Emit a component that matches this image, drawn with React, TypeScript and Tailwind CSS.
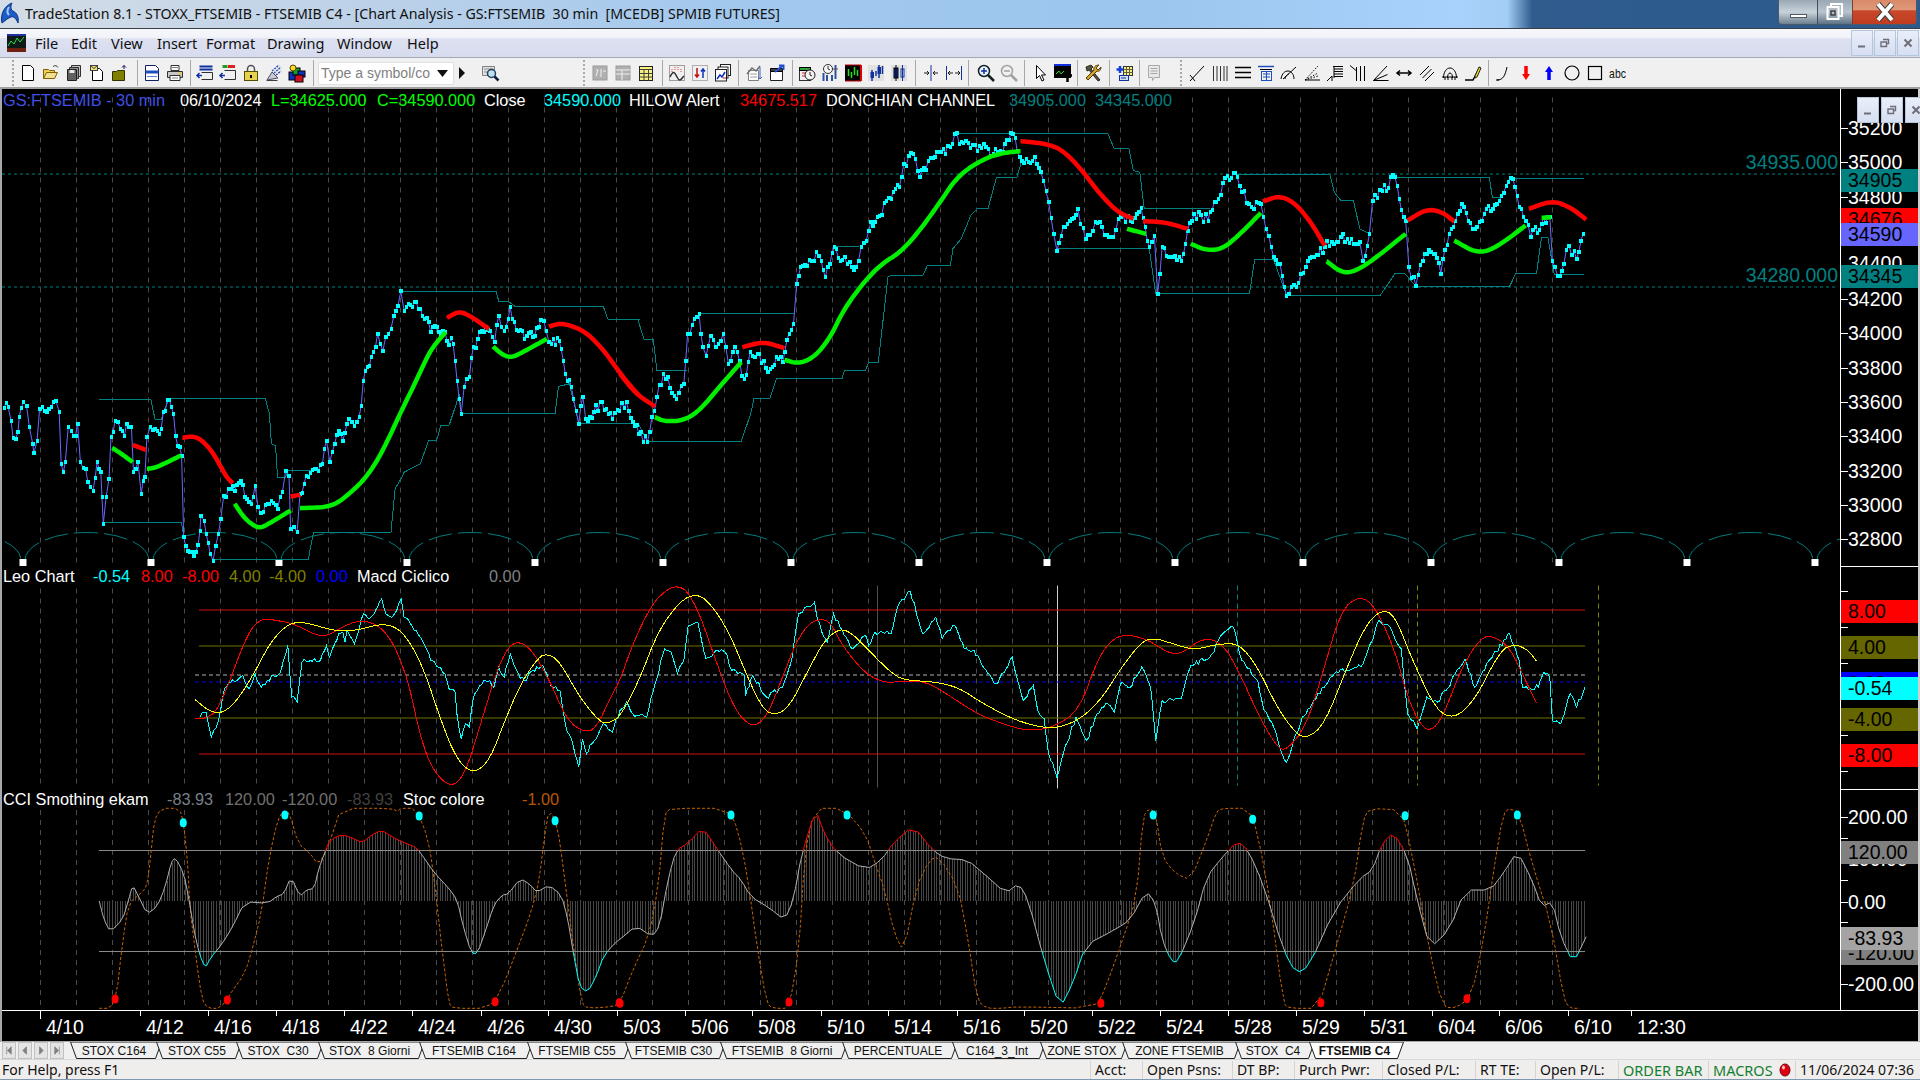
import React from 'react'

// ---- helpers: points are read off crops, z8/z11 etc turn them into screen pixels
type P = [number, number]
const parse = (s: string): P[] =>
  s.trim().split(/\s+/).map((p) => {
    const [a, b] = p.split(',')
    return [Number(a), Number(b)] as P
  })
const crop = (ox: number, oy: number, sx: number) => (s: string): P[] =>
  parse(s).map(([x, y]) => [ox + x / sx, oy + y / 3] as P)
const z8 = crop(0, 280, 2.45)
const z9 = crop(0, 560, 2.45)
const z10 = crop(0, 790, 2.45)
const z11 = crop(620, 120, 1.568)
const z12 = crop(620, 570, 1.568)
const join = (a: P[], b: P[]) => [...a.filter((p) => p[0] < b[0][0]), ...b]
const str = (pts: P[]) => pts.map(([x, y]) => `${x.toFixed(1)},${y.toFixed(1)}`).join(' ')

// corner cutting, keeps the two end points
const smooth = (pts: P[], rounds = 3): P[] => {
  let cur = pts
  for (let r = 0; r < rounds; r++) {
    const out: P[] = [cur[0]]
    for (let i = 0; i < cur.length - 1; i++) {
      const [x0, y0] = cur[i]
      const [x1, y1] = cur[i + 1]
      out.push([x0 + (x1 - x0) * 0.25, y0 + (y1 - y0) * 0.25], [x0 + (x1 - x0) * 0.75, y0 + (y1 - y0) * 0.75])
    }
    out.push(cur[cur.length - 1])
    cur = out
  }
  return cur
}

let seed = 7
const rnd = () => {
  seed = (seed * 16807) % 2147483647
  return seed / 2147483647 - 0.5
}
const rough = (pts: P[], step: number, amp: number) => {
  const out: P[] = []
  for (let i = 0; i < pts.length - 1; i++) {
    const [x0, y0] = pts[i]
    const [x1, y1] = pts[i + 1]
    const n = Math.max(1, Math.round((x1 - x0) / step))
    for (let k = 0; k < n; k++) {
      const t = k / n
      out.push([x0 + (x1 - x0) * t, y0 + (y1 - y0) * t + (k === 0 ? 0 : rnd() * amp)])
    }
  }
  out.push(pts[pts.length - 1])
  return out
}

// ---- price panel data
const price = rough(
  join(
    z8('10,382 20,380 27,420 32,472 44,455 47,410 57,365 65,375 72,440 80,490 83,518 91,480 97,385 110,390 125,380 137,360 145,395 150,550 155,575 160,545 167,440 175,450 185,465 190,430 197,545 210,565 215,605 228,630 238,545 247,575 250,650 253,730 260,650 267,595 272,470 282,420 295,445 305,465 310,430 322,438 327,575 338,545 346,640 355,590 360,470 368,440 385,450 395,445 400,395 415,358 425,400 430,465 440,500 445,525 450,770 460,810 480,815 490,750 492,705 500,720 505,760 515,820 522,840 535,760 541,715 548,645 565,625 575,630 590,600 605,655 615,670 625,615 632,680 645,695 665,660 680,685 692,635 700,570 708,585 712,745 720,740 728,755 735,640 745,610 755,590 770,565 790,550 800,480 808,545 820,490 830,450 840,480 855,415 868,435 880,408 885,375 890,300 900,260 915,215 925,160 938,210 945,170 958,145 965,105 975,75 982,32 990,90 1000,70 1020,65 1035,105 1050,125 1055,155 1060,140 1085,150 1095,180 1110,190 1120,300 1125,355 1130,400 1137,320 1150,290 1160,200 1170,175 1180,150 1200,150 1212,185 1222,105 1235,150 1250,80 1260,125 1285,175 1310,165 1325,118 1332,120 1345,185 1370,180 1380,240 1390,300 1400,320 1405,355 1418,430 1428,350 1435,415 1455,395 1475,365 1500,415 1535,365 1550,425 1565,460'),
    z11('43,965 50,890 58,830 68,760 75,770 88,835 100,790 106,640 124,580 130,680 135,705 142,645 150,680 162,640 170,730 180,680 195,775 204,695 215,700 232,755 245,710 255,725 265,640 272,610 277,490 283,440 300,420 312,405 322,470 336,380 345,420 360,425 370,440 378,380 390,330 403,290 425,235 438,200 445,130 460,100 470,170 483,120 497,95 510,100 525,40 535,65 560,90 570,70 585,100 600,95 616,40 630,120 650,110 660,155 672,245 680,340 685,390 695,320 718,265 730,355 745,305 770,350 785,290 800,300 817,262 830,380 838,345 843,520 850,380 860,410 880,420 890,330 900,280 922,300 935,245 952,165 968,170 975,215 990,260 1005,250 1017,345 1025,410 1035,430 1045,525 1060,500 1075,440 1085,410 1105,380 1130,350 1160,365 1165,420 1175,340 1180,240 1195,210 1215,170 1222,235 1232,300 1237,440 1248,495 1262,400 1278,400 1287,460 1300,340 1320,250 1340,325 1355,280 1375,250 1400,175 1410,260 1420,300 1428,350 1445,310 1458,290 1462,420 1470,465 1480,430 1488,375 1500,415 1510,340')
  ),
  2.2,
  10
)

const donchian = [
  z8('243,358 370,358 380,418 395,418 400,395 415,355 650,355 660,400 665,490 675,495 680,592 700,592 703,570 770,570'),
  z8('982,32 1215,32 1222,62 1245,62 1262,78 1478,78 1490,118 1568,118'),
  z11('0,598 28,598 38,658 52,658 58,750 105,750'),
  z11('124,580 272,580'),
  z11('337,378 375,378'),
  z11('525,40 765,40 775,85 798,85 805,150 815,155 822,265 925,265'),
  z11('960,162 1113,162 1120,215 1130,240 1150,240 1160,325 1175,340'),
  z11('1215,172 1363,172 1368,230 1385,230'),
  z11('1400,175 1512,175'),
  z8('253,727 445,727 450,770'),
  z8('525,838 755,838 768,755 958,755 968,625 985,590 990,575 1030,550 1050,480 1070,480 1080,435 1100,435 1118,370 1125,340 1130,398 1360,398 1368,318 1395,310 1418,428 1560,428'),
  z11('0,908 28,908 43,962 190,962 205,880 210,835 235,835 245,775 348,775 352,750 385,750 390,725 405,725 420,470 425,465 475,465 482,435 518,435 522,385 535,355 550,285 560,265 577,265 590,172 622,172 630,120'),
  z11('685,385 830,385 840,520 987,520 995,418 1025,418 1045,525 1192,525 1215,460 1230,458 1248,497 1395,497 1405,458 1437,458 1445,350 1455,350 1465,463 1512,463'),
]

const maGreen = [
  z8('275,502 300,522 325,545'),
  z8('360,565 380,562 410,545 443,525'),
  z8('575,670 600,715 625,738 640,742 665,725 712,690'),
  z8('735,683 800,680 830,665 860,635 890,600 920,550 950,480 980,400 1020,300 1050,220 1070,185 1092,155'),
  z8('1208,198 1230,222 1253,232 1285,212 1340,175'),
  z11('55,890 70,903 100,900 125,870 160,790 190,725'),
  z11('258,718 280,730 305,710 330,650 350,570 380,490 410,430 440,395 470,330 500,250 530,165 570,115 600,97 628,92'),
  z11('795,325 825,340'),
  z11('895,370 920,390 945,385 970,345 1005,277'),
  z11('1108,422 1130,455 1150,455 1180,420 1232,340'),
  z11('1308,360 1345,400 1375,380 1420,315'),
  z11('1445,292 1460,290'),
].map((p) => smooth(p))
const maRed = [
  z8('325,493 357,508'),
  z8('447,472 470,467 490,475 515,505 535,545 555,590 570,608'),
  z8('712,648 735,643'),
  z8('1095,112 1125,92 1150,105 1180,130 1198,145'),
  z8('1345,138 1375,128 1410,140 1440,160 1480,210 1520,280 1565,345'),
  z11('0,760 25,820 55,858'),
  z11('192,680 225,663 258,683'),
  z11('628,62 670,70 695,90 725,150 750,215 780,275 805,295'),
  z11('820,302 855,305 890,325'),
  z11('1008,243 1035,225 1060,250 1085,310 1105,375'),
  z11('1235,300 1265,265 1290,275 1308,303'),
  z11('1425,265 1462,240 1490,260 1515,297'),
].map((p) => smooth(p))

// ---- macd panel data
const macdCyan = rough(
  join(
    z9('490,470 505,455 518,530 535,480 550,385 565,365 595,345 610,385 625,340 640,380 670,345 685,340 705,255 715,410 728,425 740,305 770,295 785,300 800,255 807,290 830,220 840,215 845,245 850,210 868,250 890,160 905,175 920,150 935,115 945,160 960,170 972,150 983,115 990,170 1020,210 1045,265 1055,300 1090,340 1100,385 1115,395 1120,465 1130,535 1140,490 1150,500 1160,410 1185,360 1200,360 1210,380 1222,320 1235,350 1250,280 1270,340 1285,360 1315,320 1330,315 1350,375 1372,390 1385,490 1405,560 1418,618 1427,535 1437,580 1450,550 1478,490 1500,515'),
    z12('0,420 10,395 20,430 42,440 55,340 70,235 80,245 90,310 100,270 107,165 122,155 135,265 150,240 165,245 175,300 195,315 197,375 208,315 230,380 255,350 270,260 280,130 305,95 310,150 325,215 335,130 345,170 365,235 385,195 390,225 400,185 425,190 435,110 455,62 475,190 495,140 505,205 525,165 540,235 555,240 570,290 590,340 615,260 632,390 648,345 655,420 665,445 672,550 685,620 695,550 715,440 732,510 748,430 765,400 775,425 785,340 800,350 818,290 832,350 840,510 850,390 880,385 895,285 925,260 945,190 962,170 975,270 1000,330 1010,420 1025,470 1040,560 1045,575 1070,440 1085,400 1120,310 1165,280 1180,210 1190,150 1210,180 1225,235 1235,430 1250,475 1265,380 1282,395 1295,360 1325,265 1340,350 1365,265 1395,190 1410,270 1415,350 1440,350 1448,305 1458,320 1462,450 1475,460 1490,370 1500,410 1513,350')
  ),
  2,
  5
)
const macdRed = smooth(
  join(
    z9('478,475 500,475 530,455 560,370 595,255 620,195 645,175 670,178 720,190 770,222 800,228 840,198 885,178 930,195 965,250 1000,360 1030,530 1060,630 1105,683 1140,640 1180,480 1220,320 1250,250 1280,245 1310,280 1350,370 1390,480 1430,515 1460,505 1500,400'),
    z12('0,330 20,220 50,100 75,55 90,47 105,60 125,130 150,270 180,420 207,472 230,440 255,320 275,220 295,160 315,145 330,155 350,230 385,310 415,337 440,333 480,332 520,380 560,430 600,460 640,482 680,470 720,420 750,260 775,200 800,193 830,210 860,248 880,250 915,200 945,220 970,300 1000,430 1030,530 1045,540 1075,470 1100,320 1130,120 1160,75 1185,110 1215,240 1235,380 1255,465 1272,482 1290,440 1320,290 1350,200 1370,197 1395,230 1420,330 1437,398')
  ),
  2
)
const macdYellow = smooth(
  join(
    z9('478,417 510,450 540,460 575,430 620,345 660,250 700,195 735,183 780,197 830,213 880,208 925,192 965,195 1000,235 1040,330 1080,480 1120,600 1160,640 1200,600 1240,470 1280,360 1320,290 1340,280 1370,300 1420,410 1470,485 1490,488'),
    z12('0,440 30,330 60,180 95,90 120,70 140,95 170,180 200,320 225,420 245,433 265,410 295,300 320,210 345,173 365,190 395,250 430,315 450,330 490,333 530,350 570,400 620,450 670,475 710,460 750,400 790,280 820,210 840,203 870,222 900,238 935,222 970,217 1000,290 1030,410 1060,490 1078,503 1105,460 1140,290 1170,160 1195,117 1215,135 1245,280 1280,420 1308,445 1340,390 1380,240 1403,220 1425,240 1437,272')
  ),
  2
)

// ---- cci panel data
const cci = smooth(
  join(
    z10('243,333 255,390 270,425 300,390 315,330 325,285 340,320 360,372 385,350 405,290 420,215 430,203 450,250 462,320 475,420 488,490 503,535 515,505 545,460 570,410 600,335 655,340 680,318 695,312 713,260 735,320 750,300 770,295 780,240 795,190 808,150 838,133 865,145 888,158 910,135 935,120 960,140 990,158 1020,172 1040,205 1065,250 1100,295 1120,330 1135,410 1155,490 1170,490 1190,420 1210,345 1230,315 1245,312 1275,265 1300,285 1315,307 1345,285 1375,315 1390,380 1405,490 1420,590 1440,607 1460,560 1480,495 1510,455'),
    z12('0,1108 25,1067 50,1100 62,1070 75,930 88,840 105,822 130,772 150,830 175,900 190,930 205,980 235,1015 258,1050 272,990 285,850 307,718 320,790 340,850 385,900 410,870 430,815 460,768 490,840 510,865 545,870 570,910 605,970 625,940 640,990 665,1170 690,1315 710,1240 730,1125 775,1080 800,1050 825,962 840,1000 850,1110 865,1175 875,1175 900,1060 920,920 945,860 968,813 985,840 1010,950 1040,1140 1060,1210 1080,1190 1120,1020 1160,925 1180,900 1195,820 1213,787 1235,860 1250,990 1270,1135 1300,1080 1325,960 1365,960 1385,910 1407,843 1430,930 1445,1010 1462,995 1475,1100 1495,1180 1515,1100')
  ),
  1
)
const stoch = smooth(
  join(
    z10('243,655 270,655 285,620 300,460 315,340 345,310 360,290 370,190 378,90 395,55 440,55 450,100 460,220 465,350 480,500 495,630 510,655 540,655 565,610 600,550 620,470 640,370 660,200 680,90 695,62 710,70 730,160 760,190 780,225 800,180 815,130 835,55 960,55 975,65 980,55 1020,55 1050,150 1065,280 1085,500 1100,640 1110,655 1195,655 1225,610 1270,470 1300,370 1320,280 1335,130 1345,60 1365,100 1385,280 1405,470 1425,640 1440,655 1500,650'),
    z12('0,1300 20,1200 45,1100 60,950 70,730 80,715 170,715 185,780 200,920 215,1130 230,1300 240,1315 265,1315 280,1150 290,850 305,715 350,715 385,790 400,880 415,960 430,1090 445,1145 465,950 485,870 500,860 530,950 545,1100 560,1290 575,1315 600,1315 620,1310 745,1315 760,1260 790,1100 810,980 820,740 830,715 840,730 850,860 870,910 895,930 920,810 935,725 945,715 985,715 1000,790 1020,1000 1040,1300 1050,1315 1095,1315 1120,1150 1150,950 1165,750 1175,715 1225,720 1240,830 1270,1150 1290,1310 1310,1315 1335,1280 1355,1100 1370,900 1385,730 1395,715 1410,730 1430,880 1460,1060 1480,1290 1490,1315 1505,1315')
  ),
  1
)
const dotsCyan = [...z10('449,98 698,75 1027,78 1360,92'), ...z12('174,735 356,735 836,735 992,748 1231,737 1407,735')]
const dotsRed = [...z10('282,627 557,630 1213,635 1517,638'), ...z12('0,1300 265,1296 754,1300 1099,1298 1328,1286')]

const yAt = (pts: P[], x: number) => {
  for (let i = 0; i < pts.length - 1; i++) {
    if (x >= pts[i][0] && x <= pts[i + 1][0]) {
      const t = (x - pts[i][0]) / (pts[i + 1][0] - pts[i][0] || 1)
      return pts[i][1] + (pts[i + 1][1] - pts[i][1]) * t
    }
  }
  return 901
}
const histo: string[] = []
for (let x = 99; x < 1586; x += 2.6) histo.push(`M${Math.round(x) + 0.5} 901V${yAt(cci, x).toFixed(1)}`)

const gridX = Array.from({ length: 43 }, (_, k) => Math.round(39.6 + 36 * k) + 0.5)
const Grid = ({ y1, y2 }: { y1: number; y2: number }) => (
  <g stroke="#4a4a4a" strokeDasharray="5 5">
    {gridX.map((x) => (
      <line key={x} x1={x} x2={x} y1={y1} y2={y2} />
    ))}
  </g>
)

const archX = Array.from({ length: 16 }, (_, k) => 23 + 128 * (k - 1))

function PricePlot() {
  return (
    <svg viewBox="2 89 1838 477" className="absolute inset-0 w-full h-full">
      <Grid y1={97} y2={566} />
      <g stroke="#008080" strokeDasharray="3 3">
        <line x1="2" x2="1836" y1="173.5" y2="173.5" />
        <line x1="2" x2="1836" y1="286.5" y2="286.5" />
      </g>
      <g fill="none" stroke="#007c7c" strokeDasharray="24 6">
        {archX.map((x) => (
          <path key={x} d={`M${x + 2} 560A62 28 0 0 1 ${x + 126} 560`} />
        ))}
      </g>
      {archX.slice(1, 16).map((x) => (
        <rect key={x} x={x - 3.5} y="558.5" width="7" height="7" fill="#fff" />
      ))}
      <g fill="none" stroke="#008080" shapeRendering="crispEdges">
        {donchian.map((p, i) => (
          <polyline key={i} points={str(p)} />
        ))}
      </g>
      <polyline points={str(price)} fill="none" stroke="#6a6aff" />
      <g fill="#00ffff" shapeRendering="crispEdges">
        {price.map(([x, y], i) => (
          <rect key={i} x={x - 1.5} y={y - 2} width="3.5" height="4" />
        ))}
      </g>
      <g fill="none" strokeWidth="4.5" strokeLinejoin="round">
        {maGreen.map((p, i) => (
          <polyline key={i} points={str(p)} stroke="#00f000" />
        ))}
        {maRed.map((p, i) => (
          <polyline key={i} points={str(p)} stroke="#ff0000" />
        ))}
      </g>
    </svg>
  )
}

function MacdPlot() {
  return (
    <svg viewBox="2 567 1838 222" className="absolute inset-0 w-full h-full">
      <Grid y1={588} y2={785} />
      <line x1="877.5" x2="877.5" y1="585" y2="787" stroke="#505050" />
      <line x1="1057.5" x2="1057.5" y1="585" y2="788" stroke="#d0d0d0" />
      <line x1="1237.5" x2="1237.5" y1="585" y2="785" stroke="#008080" strokeDasharray="5 4" />
      <line x1="1417.5" x2="1417.5" y1="585" y2="785" stroke="#808000" strokeDasharray="5 4" />
      <line x1="1598.5" x2="1598.5" y1="585" y2="785" stroke="#808000" strokeDasharray="5 4" />
      <g strokeWidth="1">
        <line x1="199" x2="1585" y1="609.5" y2="609.5" stroke="#d01010" />
        <line x1="199" x2="1585" y1="753.5" y2="753.5" stroke="#d01010" />
        <line x1="199" x2="1585" y1="645.5" y2="645.5" stroke="#6f6f00" />
        <line x1="199" x2="1585" y1="717.5" y2="717.5" stroke="#6f6f00" />
        <line x1="195" x2="1585" y1="674.5" y2="674.5" stroke="#b0b0b0" strokeDasharray="4 3" />
        <line x1="195" x2="1585" y1="681.5" y2="681.5" stroke="#0000e0" strokeDasharray="4 3" />
      </g>
      <g fill="none" shapeRendering="crispEdges">
        <polyline points={str(macdCyan)} stroke="#00ffff" />
        <polyline points={str(macdRed)} stroke="#ff0000" />
        <polyline points={str(macdYellow)} stroke="#ffff00" />
      </g>
    </svg>
  )
}

function CciPlot() {
  return (
    <svg viewBox="2 790 1838 220" className="absolute inset-0 w-full h-full">
      <defs>
        <clipPath id="cciTop">
          <rect x="0" y="790" width="1840" height="60.7" />
        </clipPath>
        <clipPath id="cciMid">
          <rect x="0" y="850.7" width="1840" height="100.6" />
        </clipPath>
        <clipPath id="cciLow">
          <rect x="0" y="951.3" width="1840" height="60" />
        </clipPath>
      </defs>
      <Grid y1={810} y2={1010} />
      <path d={histo.join('')} stroke="#464646" fill="none" shapeRendering="crispEdges" />
      <line x1="99" x2="1585" y1="850.5" y2="850.5" stroke="#8a8a8a" />
      <line x1="99" x2="1585" y1="951.5" y2="951.5" stroke="#8a8a8a" />
      <polyline points={str(stoch)} fill="none" stroke="#c86400" strokeDasharray="3 2" />
      <polyline points={str(cci)} fill="none" stroke="#b0b0b0" clipPath="url(#cciMid)" />
      <polyline points={str(cci)} fill="none" stroke="#ff0000" clipPath="url(#cciTop)" />
      <polyline points={str(cci)} fill="none" stroke="#00ffff" clipPath="url(#cciLow)" />
      {dotsCyan.map(([x, y], i) => (
        <ellipse key={i} cx={x} cy={y} rx="3.5" ry="4.5" fill="#00ffff" />
      ))}
      {dotsRed.map(([x, y], i) => (
        <ellipse key={i} cx={x} cy={y} rx="3.5" ry="4.5" fill="#ff0000" />
      ))}
    </svg>
  )
}

// ---- axis column
type Flag = { y: number; t: string; bg: string }
function Axis(props: { top: number; ticks: number[]; labels: [number, string][]; flags: Flag[]; divider?: boolean }) {
  return (
    <div className={`relative w-[78px] overflow-hidden border-l border-white ${props.divider ? 'border-b' : ''}`}>
      {props.ticks.map((y) => (
        <div key={y} className="absolute left-0 w-[7px] h-px bg-white" style={{ top: y - props.top }} />
      ))}
      {props.labels.map(([y, t]) => (
        <div key={t} className="absolute left-[7px] leading-[23px] text-[19.5px] text-white" style={{ top: y - props.top - 11.5 }}>
          {t}
        </div>
      ))}
      {props.flags.map((f) => (
        <div
          key={f.t + f.y}
          className={`absolute left-0 right-0 h-[23px] pl-[7px] leading-[23px] text-[19.5px] text-black overflow-hidden ${f.bg}`}
          style={{ top: f.y - props.top }}
        >
          {f.t}
        </div>
      ))}
    </div>
  )
}

const Mdi = ({ kind, className = '' }: { kind: string; className?: string }) => (
  <div className={`w-[22px] h-[26px] flex items-center justify-center bg-[linear-gradient(#e9eef9,#d6def2)] border border-[#b4c6da] ${className}`}>
    <svg width="14" height="14" viewBox="0 0 14 14" fill="none" stroke="#6e6e78" strokeWidth="1.4">
      {kind === 'min' && <path d="M3 10.5h7" strokeWidth="2" />}
      {kind === 'res' && <path d="M5 3.5h5.5v4h-2M3 6h5.5v4.5H3z" />}
      {kind === 'x' && <path d="M3.5 3.5l7 7M10.5 3.5l-7 7" strokeWidth="2" />}
    </svg>
  </div>
)

// ---- toolbar pictures, 20px box
const S = ({ children }: { children: React.ReactNode }) => (
  <svg width="20" height="20" viewBox="0 0 20 20" fill="none" stroke="#000" strokeWidth="1">
    {children}
  </svg>
)
const tile = <rect x="3" y="3" width="14" height="14" fill="#b0b0b0" stroke="#9a9a9a" />

const icons1 = [
  <S><path d="M4.500 2.500h8l3 3v12h-11z" fill="#fff" /></S>,
  <S><path d="M2.500 15.500v-9h5l1 1h5v2" fill="#f0d060" stroke="#806000" /><path d="M2.500 15.500l3-6h11l-3 6z" fill="#f0e090" stroke="#806000" /><path d="M12 3.500c2-1.500 4-1 5 1" stroke="#404040" /></S>,
  <S><path d="M7.500 2.500h9v11h-9z" fill="#c0c0c0" stroke="#303030" /><path d="M5.500 4.500h9v11h-9z" fill="#909090" stroke="#303030" /><path d="M3.500 6.500h9v11h-9z" fill="#606060" stroke="#202020" /><rect x="5.500" y="7" width="5" height="3" fill="#e8e8e8" stroke="none" /></S>,
  <S><path d="M5.500 5.500h7l3 3v9h-10z" fill="#fff" /><rect x="3.500" y="2.500" width="7" height="5" fill="#f4e070" stroke="#404040" /><path d="M3.500 2.500l3.500 3 3.500-3" stroke="#404040" /></S>,
  <S><path d="M2.500 17.500v-9h4l1-1h7v10z" fill="#808000" stroke="#303000" /><path d="M14 6V2.500M12 4.500l2-2 2 2" stroke="#101060" /></S>,
]
const icons2 = [
  <S><path d="M3.500 2.500h10l3 3v12h-13z" fill="#fff" stroke="#102060" /><rect x="3.500" y="7.500" width="13" height="3" fill="#2050c0" stroke="none" /><path d="M5 13.500h10" stroke="#6080d0" /></S>,
  <S><path d="M6 2.500h8v5h-8z" fill="#fff" stroke="#303030" /><path d="M2.500 8.500h15v6h-15z" fill="#c8c8c8" stroke="#303030" /><path d="M5 12.500h10v5H5z" fill="#fff" stroke="#303030" /><path d="M7 4.500h6M7 15h6" stroke="#808080" /><rect x="13" y="9.500" width="3" height="2" fill="#f0c040" stroke="none" /></S>,
]
const icons3 = [
  <S><path d="M4.500 3.500h13M4.500 6.500h13" stroke="#1030a0" strokeWidth="2" /><path d="M6.500 9.500h11v7h-11" stroke="#303030" /><path d="M7 12.500H2M4.500 10l-2.500 2.500L4.500 15" stroke="#1030a0" strokeWidth="1.500" /></S>,
  <S><path d="M4.500 3.500h5" stroke="#20a020" strokeWidth="3" /><path d="M10 3.500h7" stroke="#e02020" strokeWidth="3" /><path d="M6.500 7.500h11v9h-11" stroke="#303030" /><path d="M7 12.500H2M4.500 10l-2.500 2.500L4.500 15" stroke="#1030a0" strokeWidth="1.500" /></S>,
  <S><path d="M6.500 9V6a3.500 3.500 0 0 1 7 0v3" stroke="#505050" strokeWidth="1.500" /><rect x="3.500" y="8.500" width="13" height="9" fill="#e8d050" stroke="#505000" /><rect x="9" y="12" width="2" height="3" fill="#000" stroke="none" /></S>,
  <S><path d="M3 17l5-8 6 6z" fill="#c8c8d8" stroke="#505060" /><path d="M8 8l7-6M10 10l7-6M12 12l5-4" stroke="#3050b0" strokeWidth="1.500" strokeDasharray="2 1" /><path d="M2.500 17.500h11" stroke="#404040" /></S>,
  <S><rect x="2" y="9" width="7" height="8" fill="#1030c0" stroke="#000" /><rect x="6" y="5" width="7" height="7" fill="#10a030" stroke="#000" /><rect x="11" y="8" width="7" height="6" fill="#1030c0" stroke="#000" /><rect x="8" y="12" width="8" height="7" fill="#d01020" stroke="#000" /><circle cx="6" cy="5" r="3" fill="#f0e020" stroke="#604000" /></S>,
]
const magnifier = <S><path d="M2.500 3.500h12v9h-12z" fill="#e0e0e0" stroke="#808080" /><path d="M4 6h9M4 9h5" stroke="#909090" /><circle cx="11.500" cy="10.500" r="4" fill="#c0e0f0" stroke="#204060" strokeWidth="1.500" /><path d="M14.500 13.500l4 4" stroke="#102040" strokeWidth="2.500" /></S>
const icons4 = [
  <S>{tile}<path d="M6 7h2l-2 6M11 6v8M13 8h3" stroke="#f0f0f0" /></S>,
  <S>{tile}<path d="M3 7h14M3 11h14M9 7v10" stroke="#f0f0f0" /></S>,
  <S><rect x="3.500" y="3.500" width="13" height="14" fill="#f8f080" stroke="#202020" /><path d="M3.500 6.500h13M3.500 10.500h13M3.500 14h13M8 6.500v11M12.500 6.500v11" stroke="#404040" /></S>,
]
const icons5 = [
  <S><rect x="2.500" y="2.500" width="15" height="15" fill="#f0f0f0" stroke="#a0a0a0" /><path d="M3 14c3-6 4-6 7 0s4 2 7-1" stroke="#303030" strokeWidth="1.500" /><path d="M5 9V5M8 7V3M11 7V4M14 9V5" stroke="#e04030" strokeDasharray="1 1" /></S>,
  <S><rect x="2.500" y="2.500" width="15" height="15" fill="#f0f0f0" stroke="#b0b0b0" /><path d="M7 5v9M5 11.500L7 14l2-2.500" stroke="#c01010" strokeWidth="1.500" /><path d="M13 15V6M11 8.500L13 6l2 2.500" stroke="#1030c0" strokeWidth="1.500" /></S>,
  <S><rect x="7.500" y="1.500" width="10" height="11" fill="#fff" stroke="#202020" /><rect x="5" y="4" width="10" height="11" fill="#fff" stroke="#202020" /><rect x="2.500" y="6.500" width="11" height="11.500" fill="#fff" stroke="#202020" /><path d="M4 16l3-4 2 2 3-5" stroke="#1030c0" strokeWidth="1.500" /><path d="M10 15h3" stroke="#d01010" /></S>,
]
const icons6 = [
  <S><path d="M4.500 7.500h10v10h-10z" fill="#fff" stroke="#808080" /><path d="M3 11l5-6 4 3 4-5" stroke="#707070" strokeWidth="1.500" /><path d="M6 11h7M6 14h7" stroke="#a0a0a0" /><path d="M16 4v12M14 14l2 2 2-2" stroke="#4060c0" /></S>,
  <S><path d="M3.500 8.500h12v9h-12z" fill="#fff" stroke="#202020" /><path d="M3.500 5.500h12v3h-12z" fill="#404040" /><path d="M8 9l7-6M12 2.500h4.500V7" stroke="#2050d0" strokeWidth="2" /></S>,
]
const icons7 = [
  <S><rect x="2.500" y="4.500" width="11" height="13" fill="#f0f0f0" stroke="#303030" /><path d="M2.500 4.500h11v3h-11z" fill="#30a040" /><path d="M5 10h6M5 13h3" stroke="#e02020" /><circle cx="13" cy="12" r="5" fill="#f4f4f4" stroke="#202020" /><path d="M13 9v3l2 1" stroke="#202020" /></S>,
  <S><circle cx="8" cy="6" r="4.500" fill="#f8f8f8" stroke="#303030" /><path d="M8 3v3l2 1" stroke="#303030" /><path d="M3.500 10v8M7 12v6M12 12v6" stroke="#3050a0" strokeWidth="2" /><path d="M15.500 2v14" stroke="#3050a0" strokeWidth="2" /><path d="M13 6h5" stroke="#505050" /></S>,
  <svg width="20" height="20" viewBox="0 0 20 20" fill="none"><rect x="2" y="2" width="16" height="16" fill="#000" /><path d="M18 2v16" stroke="#e00000" strokeWidth="2" /><path d="M2 18h16M2 2h16" stroke="#c00000" /><path d="M5.500 6v7M8.500 9v6M11.500 4v8M14.500 7v6" stroke="#20e020" strokeWidth="1.500" /></svg>,
  <S><rect x="2" y="2" width="16" height="16" fill="#e0e0e0" stroke="none" /><path d="M6 7v11M13 2v13M10 8v5M16.500 3v8" stroke="#1030a0" strokeWidth="1.500" /><rect x="4.500" y="9" width="3.500" height="6" fill="#1030a0" stroke="none" /><rect x="11.500" y="4" width="3.500" height="7" fill="#1030a0" stroke="none" /></S>,
  <S><rect x="2" y="2" width="16" height="16" fill="#e0e0e0" stroke="none" /><rect x="5" y="5" width="4" height="10" fill="#1030a0" stroke="#000" /><path d="M7 2v16" stroke="#000" /><rect x="12" y="6" width="3" height="8" fill="#f0f0f0" stroke="#1030a0" /><path d="M13.500 2v16" stroke="#1030a0" /></S>,
]
const icons8 = [
  <S><path d="M10 2v16" stroke="#1030a0" /><path d="M3 10h5M6 8l2 2-2 2" stroke="#202020" /><path d="M17 10h-5M14 8l-2 2 2 2" stroke="#202020" /></S>,
  <S><path d="M2.500 3v14M17.500 3v14" stroke="#1030a0" /><path d="M4 10h5M6 8l-2 2 2 2M16 10h-5M14 8l2 2-2 2" stroke="#202020" /></S>,
]
const icons9 = [
  <S><circle cx="8" cy="8" r="5.500" fill="#e8f4ff" stroke="#102020" strokeWidth="1.500" /><path d="M8 5v6M5 8h6" stroke="#1030a0" strokeWidth="1.500" /><path d="M12 12l6 6" stroke="#102020" strokeWidth="2.500" /></S>,
  <S><circle cx="8" cy="8" r="5.500" fill="#f0f0f0" stroke="#a0a0a0" strokeWidth="1.500" /><path d="M5 8h6" stroke="#a0a0a0" strokeWidth="1.500" /><path d="M12 12l6 6" stroke="#a0a0a0" strokeWidth="2.500" /></S>,
]
const icons10 = [
  <S><path d="M6.500 2.500v13l3-3 2.500 5.500 2-1-2.500-5h4z" fill="#fff" stroke="#000" /></S>,
  <svg width="20" height="20" viewBox="0 0 20 20" fill="none"><rect x="1" y="2" width="17" height="13" fill="#000" /><rect x="1" y="1" width="17" height="2" fill="#1030e0" /><path d="M3 11l3-3 2 3 3-3" stroke="#20e020" /><path d="M10 12.500h9M14.500 12.500V19" stroke="#000" strokeWidth="2.500" /></svg>,
]
const icon11 = <S><path d="M3 4l5-2 2 2-2 2 9 11-2 1-9-11-2 1z" fill="#505040" stroke="#303020" /><path d="M16 2l-3 3 2 2 3-3c0 3-2 5-4 4L5 17l-2-2 8-8c-1-2 1-5 5-5z" fill="#d8a030" stroke="#504000" /></S>
const icon12 = <S><path d="M5 3v7M1.500 6.500h7" stroke="#1040e0" strokeWidth="2.500" /><rect x="8.500" y="3.500" width="9" height="9" fill="#f8f080" stroke="#303030" /><path d="M8.500 6.500h9M8.500 9.500h9M11.500 3.500v9M14.500 3.500v9" stroke="#606040" /><rect x="4.500" y="12.500" width="9" height="5" fill="#d0e0f8" stroke="#1030a0" /><path d="M6 15h5" stroke="#1030a0" /></S>
const icon13 = <S><path d="M4.500 2.500h11v12h-5l-2 3v-3h-4z" fill="#e8e8e8" stroke="#a8a8a8" /><path d="M6.500 5.500h7M6.500 8h7M6.500 10.500h7" stroke="#a8a8a8" /></S>
const drawTools = [
  <S><path d="M3 18L17 3M3 12l5 6" /></S>,
  <S><path d="M3.500 3v15M7 3v15M10.500 3v15M14 3v15M17 3v15" stroke="#303030" /></S>,
  <S><path d="M2 4.500h16M2 9.500h16M2 14.500h16" strokeWidth="1.500" /></S>,
  <S><path d="M2 3.500h16" stroke="#2050c0" strokeWidth="1.500" /><path d="M4 6.500h12" /><rect x="5.500" y="8.500" width="10" height="9" stroke="#2050c0" /><path d="M7 11h7M7 14h7M10.500 8.500v9" stroke="#2050c0" /></S>,
  <S><path d="M2 16c1-6 4-8 7-8s6 3 6 8M6 16c1-4 3-5 4-5M4 16l13-12" /></S>,
  <S><path d="M3 17h15" /><path d="M3 17L16 3M3 17l13-7M3 17l13-4" strokeDasharray="1.500 1.500" /></S>,
  <S><path d="M2 18l5-5v5M8 3.500h10M9 6h9M9 8.500h9M9 11h9M9 13.500h9" /><path d="M9 3v12" /></S>,
  <S><path d="M2 2.500l6 5M8.500 4v14M12.500 3v15M16.500 3v15" /></S>,
  <S><path d="M2.500 17.500h15M2.500 17.500L16 3M2.500 17.500l14-6" /></S>,
  <S><path d="M3 10h14M6 7.500L3 10l3 2.500M14 7.500l3 2.500-3 2.500" strokeWidth="1.500" /></S>,
  <S><path d="M3 12l9-9M5.500 15l9-9M8 18l9-9" /></S>,
  <S><path d="M3.500 15c0-6 3-10 6.500-10s6.500 4 6.500 10M2 14h16M5 17v-3M8 17v-3M12 17v-3M15 17v-3M7.500 15c0-3 1-5 2.500-5s2.500 2 2.500 5" /></S>,
  <S><path d="M2 17h8l7-13" strokeWidth="1.500" /><path d="M12 13l4-9 2 1-4 9-2 1z" fill="#f0e020" stroke="#202020" /></S>,
]
const draw2 = [
  <S><path d="M4 17c6 0 8-4 10-13M3 17h3" /></S>,
  <S><path d="M10 3v9" stroke="#ff0000" strokeWidth="3.500" /><path d="M6 11h8l-4 6z" fill="#ff0000" stroke="none" /></S>,
  <S><path d="M10 17V8" stroke="#0000ff" strokeWidth="3.500" /><path d="M6 9h8l-4-6z" fill="#0000ff" stroke="none" /></S>,
  <S><circle cx="10" cy="10" r="7" strokeWidth="1.200" /></S>,
  <S><rect x="3.500" y="3.500" width="13" height="13" strokeWidth="1.200" /></S>,
]

const Slot = ({ children }: { children: React.ReactNode }) => (
  <div className="w-[23px] h-[23px] flex items-center justify-center">{children}</div>
)
const Group = ({ items, className }: { items: React.ReactNode[]; className: string }) => (
  <div className={`flex items-center ${className}`}>
    {items.map((n, i) => (
      <Slot key={i}>{n}</Slot>
    ))}
  </div>
)
const Sep = ({ className }: { className: string }) => <div className={`w-px h-[26px] bg-[#a8a8a8] ${className}`} />
const Grip = ({ className }: { className: string }) => (
  <div className={`w-[2px] h-[26px] border-l-2 border-dotted border-[#a8a8a8] ${className}`} />
)

const tabs: [string, number][] = [
  ['STOX C164', 70],
  ['STOX C55', 156],
  ['STOX  C30', 236],
  ['STOX  8 Giorni', 318],
  ['FTSEMIB C164', 419],
  ['FTSEMIB C55', 527],
  ['FTSEMIB C30', 625],
  ['FTSEMIB  8 Giorni', 720],
  ['PERCENTUALE', 842],
  ['C164_3_Int', 952],
  ['ZONE STOX', 1040],
  ['ZONE FTSEMIB', 1122],
  ['STOX  C4', 1235],
  ['FTSEMIB C4', 1309],
]
const tabEnd = 1398

const dates: [string, number][] = [
  ['4/10', 46], ['4/12', 146], ['4/16', 214], ['4/18', 282], ['4/22', 350], ['4/24', 418], ['4/26', 487], ['4/30', 554],
  ['5/03', 623], ['5/06', 691], ['5/08', 758], ['5/10', 827], ['5/14', 894], ['5/16', 963], ['5/20', 1030], ['5/22', 1098],
  ['5/24', 1166], ['5/28', 1234], ['5/29', 1302], ['5/31', 1370], ['6/04', 1438], ['6/06', 1505], ['6/10', 1574], ['12:30', 1637],
]

const status: [string, string, string][] = [
  ['Acct:', 'w-[52px]', 'text-[#101010]'],
  ['Open Psns:', 'w-[90px]', 'text-[#101010]'],
  ['DT BP:', 'w-[62px]', 'text-[#101010]'],
  ['Purch Pwr:', 'w-[88px]', 'text-[#101010]'],
  ['Closed P/L:', 'w-[93px]', 'text-[#101010]'],
  ['RT TE:', 'w-[60px]', 'text-[#101010]'],
  ['Open P/L:', 'w-[83px]', 'text-[#101010]'],
  ['ORDER BAR', 'w-[90px] text-[14.5px]', 'text-[#108030]'],
  ['MACROS', 'w-[67px] text-[14.5px]', 'text-[#108030]'],
]

const sans = "[font-family:'Noto_Sans',sans-serif]"

export default function App() {
  return (
    <div className="relative w-[1920px] h-[1080px] overflow-hidden flex flex-col bg-[#f0f0f0] [font-family:'Liberation_Sans',sans-serif]">
      {/* title bar */}
      <div className="h-[29px] shrink-0 flex items-start border-b border-[#3a4048] bg-[linear-gradient(90deg,#d4dde6_0%,#bed2e8_18%,#a2c8ee_38%,#9cc6ee_60%,#a8d2fb_76%,#a4cdf5_78.500%,#2f5c8d_79.800%,#2b5a8c_100%)]">
        <svg width="22" height="26" viewBox="0 0 22 26" className="ml-[0px] mt-[1px]" fill="none">
          <path d="M2 22C0 14 4 5 12 2c-2 4-1 7 1 8 4 2 6 6 5 12-2-5-5-7-7-6-3 1-5 3-9 6z" fill="#1c5cc8" stroke="#0c3080" />
          <path d="M9 6c-2 3-2 6 0 8" stroke="#9cc8f8" strokeWidth="2" />
        </svg>
        <div className={`ml-[3px] mt-[3px] whitespace-pre text-[14.2px] leading-[22px] text-[#101010] ${sans}`}>
          TradeStation 8.1 - STOXX_FTSEMIB - FTSEMIB C4 - [Chart Analysis - GS:FTSEMIB  30 min  [MCEDB] SPMIB FUTURES]
        </div>
        <div className="ml-auto mr-[3px] h-[25px] flex border border-t-0 border-[#4a5a6a] rounded-b-[4px] overflow-hidden">
          <div className="w-[38px] flex items-end justify-center pb-[6px] bg-[linear-gradient(#9aa8b4,#c8d2da_50%,#6e8090)]">
            <div className="w-[17px] h-[4px] bg-white border border-[#505a64]" />
          </div>
          <div className="w-[35px] flex items-center justify-center border-l border-[#405060] bg-[linear-gradient(#9aa8b4,#b8c4ce_50%,#5e7284)]">
            <svg width="20" height="20" viewBox="0 0 20 20" fill="none" stroke="#fff" strokeWidth="2">
              <path d="M6 4V2h11v12h-3" />
              <rect x="2.500" y="5" width="11" height="12" />
              <rect x="6" y="9" width="4" height="4" stroke="#404040" strokeWidth="1.500" />
            </svg>
          </div>
          <div className="w-[64px] flex items-center justify-center border-l border-[#804030] bg-[linear-gradient(#d88a68_0%,#e09878_40%,#c8482c_45%,#c03c20_100%)]">
            <svg width="24" height="20" viewBox="0 0 24 20" fill="none">
              <path d="M5 2l14 16M19 2L5 18" stroke="#404040" strokeWidth="6" />
              <path d="M5 2l14 16M19 2L5 18" stroke="#fff" strokeWidth="4" />
            </svg>
          </div>
        </div>
      </div>

      {/* menu bar */}
      <div className="h-[29px] shrink-0 flex items-center border-b border-[#a8a8b4] bg-[linear-gradient(#f6f7fb_0%,#f2f3f9_30%,#dde1f1_35%,#d6dbee_100%)]">
        <svg width="19" height="18" viewBox="0 0 19 18" className="ml-[7px]" fill="none">
          <rect width="19" height="18" fill="#101818" />
          <rect y="14" width="19" height="4" fill="#702010" />
          <rect width="19" height="2" fill="#2030a0" />
          <path d="M1 12l3-5 3 3 3-6 3 4 4-5" stroke="#20e040" />
        </svg>
        <div className={`ml-[9px] flex text-[14.500px] leading-[20px] text-[#101010] ${sans}`}>
          <span className="w-[36px]">File</span>
          <span className="w-[40px]">Edit</span>
          <span className="w-[46px]">View</span>
          <span className="w-[49px]">Insert</span>
          <span className="w-[61px]">Format</span>
          <span className="w-[70px]">Drawing</span>
          <span className="w-[70px]">Window</span>
          <span>Help</span>
        </div>
        <div className="ml-auto flex gap-[1px] pr-[1px]">
          <Mdi kind="min" />
          <Mdi kind="res" />
          <Mdi kind="x" />
        </div>
      </div>

      {/* toolbar */}
      <div className="h-[31px] shrink-0 flex items-center pl-[12px] pt-[1px] border-b-2 border-[#a0a0a0] bg-[#f0f0f0]">
        <Grip className="" />
        <Group items={icons1} className="ml-[2px]" />
        <Sep className="ml-[6px]" />
        <Group items={icons2} className="ml-[2px]" />
        <Sep className="ml-[4px]" />
        <Group items={icons3} className="ml-[2px]" />
        <Sep className="ml-[5px]" />
        <div className="ml-[4px] w-[136px] h-[23px] flex items-center pl-[2px] bg-white rounded-[2px] border border-[#e0e0e0] text-[14px] text-[#808080]">
          <span>Type a symbol/co</span>
          <svg width="11" height="7" viewBox="0 0 11 7" className="ml-auto mr-[5px]">
            <path d="M0 0h11L5.500 7z" fill="#101010" />
          </svg>
        </div>
        <svg width="10" height="12" viewBox="0 0 10 12" className="ml-[3px]">
          <path d="M2 0l6 6-6 6z" fill="#101010" />
        </svg>
        <Group items={[magnifier]} className="ml-[11px]" />
        <Grip className="ml-[82px]" />
        <Group items={icons4} className="ml-[3px]" />
        <Sep className="ml-[5px]" />
        <Group items={icons5} className="ml-[2px]" />
        <Sep className="ml-[4px]" />
        <Group items={icons6} className="ml-[3px]" />
        <Sep className="ml-[4px]" />
        <Group items={icons7} className="ml-[2px]" />
        <Sep className="ml-[5px]" />
        <Group items={icons8} className="ml-[3px]" />
        <Sep className="ml-[3px]" />
        <Group items={icons9} className="ml-[5px]" />
        <Sep className="ml-[4px]" />
        <Group items={icons10} className="ml-[3px]" />
        <Sep className="ml-[3px]" />
        <Group items={[icon11]} className="ml-[3px]" />
        <Sep className="ml-[5px]" />
        <Group items={[icon12]} className="ml-[3px]" />
        <Sep className="ml-[3px]" />
        <Group items={[icon13]} className="ml-[2px]" />
        <Grip className="ml-[15px]" />
        <Group items={drawTools} className="ml-[3px]" />
        <Sep className="ml-[4px]" />
        <Group items={draw2} className="ml-[2px]" />
        <div className="w-[23px] text-center text-[13px] leading-none text-[#101010] scale-x-[.8]">abc</div>
      </div>

      {/* chart window */}
      <div className="h-[952px] shrink-0 flex flex-col bg-black border-l-2 border-r-2 border-l-[#a8a8a8] border-r-[#d0d0d0]">
        {/* price panel */}
        <div className="h-[478px] shrink-0 flex">
          <div className="relative w-[1838px]">
            <PricePlot />
            <div className="relative flex pt-[2px] text-[16.3px] leading-[19px] whitespace-nowrap">
              <span className="w-[178px] pl-[1px] text-[#4050e8]">GS:FTSEMIB - 30 min</span>
              <span className="w-[91px] text-white">06/10/2024</span>
              <span className="w-[106px] text-[#00ff00]">L=34625.000</span>
              <span className="w-[107px] text-[#00ff00]">C=34590.000</span>
              <span className="w-[60px] text-white">Close</span>
              <span className="w-[85px] text-[#00ffff]">34590.000</span>
              <span className="w-[111px] text-white">HILOW Alert</span>
              <span className="w-[86px] text-[#ff0000]">34675.517</span>
              <span className="w-[183px] text-white">DONCHIAN CHANNEL</span>
              <span className="w-[86px] text-[#008080]">34905.000</span>
              <span className="text-[#008080]">34345.000</span>
            </div>
            <div className="absolute right-[2px] top-[62px] text-[19.5px] leading-[23px] text-[#008080]">34935.000</div>
            <div className="absolute right-[2px] top-[175px] text-[19.5px] leading-[23px] text-[#008080]">34280.000</div>
          </div>
          <Axis
            divider
            top={89}
            ticks={[128, 162, 197, 231, 265, 299, 333, 368, 402, 436, 471, 505, 539]}
            labels={[
              [128, '35200'],
              [162, '35000'],
              [197, '34800'],
              [263, '34400'],
              [299, '34200'],
              [333, '34000'],
              [368, '33800'],
              [402, '33600'],
              [436, '33400'],
              [471, '33200'],
              [505, '33000'],
              [539, '32800'],
            ]}
            flags={[
              { y: 169, t: '34905', bg: 'bg-[#008080]' },
              { y: 208, t: '34676', bg: 'bg-[#ff0000]' },
              { y: 223, t: '34590', bg: 'bg-[#6666ff]' },
              { y: 265, t: '34345', bg: 'bg-[#008080]' },
            ]}
          />
        </div>

        {/* macd panel */}
        <div className="h-[223px] shrink-0 flex">
          <div className="relative w-[1838px]">
            <MacdPlot />
            <div className="relative flex text-[16.3px] leading-[19px] whitespace-nowrap">
              <span className="w-[91px] pl-[1px] text-white">Leo Chart</span>
              <span className="w-[48px] text-[#00ffff]">-0.54</span>
              <span className="w-[41px] text-[#ff0000]">8.00</span>
              <span className="w-[47px] text-[#ff0000]">-8.00</span>
              <span className="w-[40px] text-[#808000]">4.00</span>
              <span className="w-[47px] text-[#808000]">-4.00</span>
              <span className="w-[41px] text-[#0000ff]">0.00</span>
              <span className="w-[132px] text-white">Macd Ciclico</span>
              <span className="text-[#808080]">0.00</span>
            </div>
          </div>
          <Axis
            divider
            top={567}
            ticks={[591, 627, 663, 699, 735, 771]}
            labels={[]}
            flags={[
              { y: 600, t: '8.00', bg: 'bg-[#ff0000]' },
              { y: 636, t: '4.00', bg: 'bg-[#666600]' },
              { y: 672, t: '0.00', bg: 'bg-[#0000ff]' },
              { y: 677, t: '-0.54', bg: 'bg-[#00ffff]' },
              { y: 708, t: '-4.00', bg: 'bg-[#666600]' },
              { y: 744, t: '-8.00', bg: 'bg-[#ff0000]' },
            ]}
          />
        </div>

        {/* cci panel */}
        <div className="h-[221px] shrink-0 flex border-b border-white">
          <div className="relative w-[1838px]">
            <CciPlot />
            <div className="relative flex text-[16.3px] leading-[19px] whitespace-nowrap">
              <span className="w-[165px] pl-[1px] text-white">CCI Smothing ekam</span>
              <span className="w-[58px] text-[#78808c]">-83.93</span>
              <span className="w-[57px] text-[#707070]">120.00</span>
              <span className="w-[65px] text-[#707070]">-120.00</span>
              <span className="w-[56px] text-[#404040]">-83.93</span>
              <span className="w-[119px] text-white">Stoc colore</span>
              <span className="text-[#b85800]">-1.00</span>
            </div>
          </div>
          <Axis
            top={790}
            ticks={[817, 838, 859, 880, 902, 922, 943, 963, 984]}
            labels={[
              [817, '200.00'],
              [859, '100.00'],
              [902, '0.00'],
              [984, '-200.00'],
            ]}
            flags={[
              { y: 841, t: '120.00', bg: 'bg-[#808080]' },
              { y: 942, t: '-120.00', bg: 'bg-[#808080]' },
              { y: 927, t: '-83.93', bg: 'bg-[#a4a4a4]' },
            ]}
          />
        </div>

        {/* date axis */}
        <div className="h-[30px] shrink-0 flex text-[19.5px] leading-[22px] text-white">
          {dates.map(([d, x], i) => {
            const start = i === 0 ? 40 : x - 6
            const next = i + 1 < dates.length ? dates[i + 1][1] - 6 : start + 60
            return (
              <div key={d} className="relative shrink-0" style={{ width: next - start, marginLeft: i === 0 ? 38 : 0 }}>
                <div className={`w-px bg-white ${i === 0 ? 'h-[8px]' : 'h-[5px]'}`} />
                <div className="absolute left-[6px] top-[5px]">{d}</div>
              </div>
            )
          })}
        </div>
      </div>

      {/* sheet tabs */}
      <div className="h-[18px] shrink-0 flex items-start bg-[#f0f0f0] border-t border-[#a8a8a8]">
        <div className="ml-[2px] w-[68px] flex gap-[2px]">
          {['M5 3v10M11 3L6 8l5 5z', 'M10 3L5 8l5 5z', 'M6 3l5 5-5 5z', 'M5 3l5 5-5 5zM11 3v10'].map((d) => (
            <svg key={d} width="14" height="17" viewBox="0 0 16 16" className="bg-[#e4e4e4] border border-[#c0c0c0]">
              <path d={d} fill="#808080" stroke="#808080" />
            </svg>
          ))}
        </div>
        <div className="flex text-[12px] leading-[16px] whitespace-pre text-[#101010]">
          {tabs.map(([t, x], i) => {
            const w = (i + 1 < tabs.length ? tabs[i + 1][1] : tabEnd) - x + 6
            const active = t === 'FTSEMIB C4'
            return (
              <div key={t} className="relative shrink-0 h-[17px] -mr-[6px] pr-[4px] flex items-center justify-center" style={{ width: w }}>
                <svg width={w} height="17" className="absolute inset-0">
                  <polygon
                    points={`0.500,0 6.500,16.500 ${w - 6.500},16.500 ${w - 0.500},0`}
                    fill={active ? '#ffffff' : '#f0f0f0'}
                    stroke="#202020"
                  />
                </svg>
                <span className={`relative ${active ? 'font-bold' : ''}`}>{t}</span>
              </div>
            )
          })}
        </div>
      </div>

      {/* status bar */}
      <div className={`h-[20px] shrink-0 flex items-center border-t border-[#d8d8d8] bg-[#f0eeec] text-[14px] leading-[18px] ${sans}`}>
        <div className="w-[1090px] pl-[2px] text-[#101010]">For Help, press F1</div>
        {status.map(([t, w, c]) => (
          <div key={t} className={`${w} pl-[4px] whitespace-nowrap border-l border-[#d4d4d4] ${c}`}>
            {t}
          </div>
        ))}
        <div className="w-[20px] flex justify-center">
          <svg width="12" height="14" viewBox="0 0 12 14">
            <ellipse cx="6" cy="7" rx="5" ry="6" fill="#e00010" stroke="#700010" />
            <ellipse cx="4.500" cy="4.500" rx="1.500" ry="2" fill="#ffc0c0" />
          </svg>
        </div>
        <div className="pl-[4px] border-l border-[#d4d4d4] text-[#101010] whitespace-nowrap">11/06/2024 07:36</div>
      </div>
      <div className="flex-1 bg-[#8098b0]" />

      {/* inner chart window buttons */}
      <div className="absolute left-[1857px] top-[97px] flex gap-[2px]">
        <Mdi kind="min" />
        <Mdi kind="res" />
        <Mdi kind="x" className="w-[14px] overflow-hidden" />
      </div>
    </div>
  )
}
